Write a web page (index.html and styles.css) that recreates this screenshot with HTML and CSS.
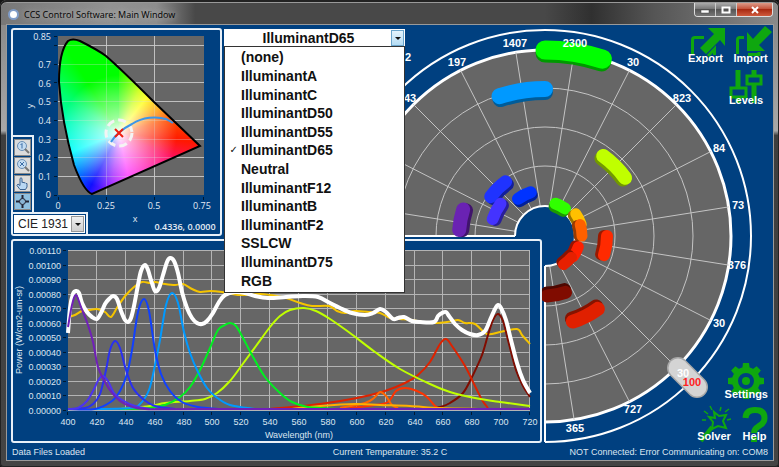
FILE: index.html
```html
<!DOCTYPE html>
<html lang="en">
<head>
  <meta charset="UTF-8">
  <meta name="viewport" content="width=device-width, initial-scale=1.0">
  <title>CCS Control Software: Main Window</title>
  <link rel="stylesheet" href="styles.css">
</head>
<body>
  <div class="window">

    <!-- Title bar -->
    <header class="titlebar">
      <span class="app-icon"></span>
      <h1>CCS Control Software: Main Window</h1>
      <div class="window-buttons">
        <button class="win-btn" aria-label="Minimize"><svg width="10" height="8"><rect x="1" y="4" width="8" height="3" fill="#fff" stroke="#444" stroke-width=".5"/></svg></button>
        <button class="win-btn" aria-label="Maximize"><svg width="10" height="8"><rect x="1.500" y="1.500" width="7" height="5" fill="#555" stroke="#fff" stroke-width="2"/></svg></button>
        <button class="win-btn close" aria-label="Close"><svg width="10" height="8"><path d="M2 1l6 6M8 1l-6 6" stroke="#fff" stroke-width="2"/></svg></button>
      </div>
    </header>

    <main class="client">

      <!-- LED dial -->
      <svg class="dial" viewBox="11 28 762 415" role="img" aria-label="LED levels">
        <defs>
          <clipPath id="dial-clip"><path d="M200 0H773V460H545V236H200Z"/></clipPath>
        </defs>
        <g clip-path="url(#dial-clip)">
          <circle cx="545" cy="236" r="206" class="rim-outer"/>
          <circle cx="545" cy="236" r="186" class="rim"/>
          <circle cx="545" cy="236" r="148" class="ring"/>
          <circle cx="545" cy="236" r="109" class="ring"/>
          <circle cx="545" cy="236" r="70" class="ring"/>
          <g id="spokes"></g>
        </g>
        <path d="M224 236H515M545 266V442" class="dial-edge"/>
        <path d="M515 236A30 30 0 1 1 545 266V236Z" fill="#004080"/>
        <path d="M515 236A30 30 0 1 1 545 266" class="dial-edge"/>
        <g id="leds"></g>
        <path d="M678 368L697 387" class="knob-edge"/>
        <path d="M678 368L697 387" class="knob"/>
        <g class="dial-labels">
          <text x="408" y="61">2</text>
          <text x="407" y="102">343</text>
          <text x="457" y="66">197</text>
          <text x="515" y="47">1407</text>
          <text x="575" y="47">2300</text>
          <text x="633" y="66">30</text>
          <text x="682" y="102">823</text>
          <text x="719" y="152">84</text>
          <text x="738" y="209">73</text>
          <text x="737" y="269">376</text>
          <text x="719" y="327">30</text>
          <text x="683" y="377">30</text>
          <text x="692" y="386" class="over">100</text>
          <text x="633" y="413">727</text>
          <text x="575" y="432">365</text>
        </g>
      </svg>

      <!-- Chromaticity diagram -->
      <section class="panel cie-panel">
        <svg class="chart" viewBox="13 30 207 204" role="img" aria-label="CIE 1931 chromaticity">
          <defs>
            <clipPath id="locus-clip"><path d="M92 194C86 192 80 181 74 165C67 140 61 112 59 82C59 62 62 48 68 41C71 39 75 39 80 41C90 46 98 50 106 56C122 70 138 86 154 102L200 146Z"/></clipPath>
          </defs>
          <rect x="58" y="36" width="146" height="159" fill="#666"/>
          <path d="M106.500 36V195M154.500 36V195M58 45.500H204M58 64.500H204M58 82.500H204M58 101.500H204M58 120.500H204M58 139.500H204M58 157.500H204M58 176.500H204" class="grid-line"/>
          <foreignObject x="56" y="36" width="148" height="160" clip-path="url(#locus-clip)"><div class="gamut"></div></foreignObject>
          <path d="M106.500 36V195M154.500 36V195M58 45.500H204M58 64.500H204M58 82.500H204M58 101.500H204M58 120.500H204M58 139.500H204M58 157.500H204M58 176.500H204" class="grid-line faint"/>
          <path d="M92 194C86 192 80 181 74 165C67 140 61 112 59 82C59 62 62 48 68 41C71 39 75 39 80 41C90 46 98 50 106 56C122 70 138 86 154 102L200 146Z" class="locus"/>
          <path d="M54 36.500H57M54 45.500H57M54 64.500H57M54 82.500H57M54 101.500H57M54 120.500H57M54 139.500H57M54 157.500H57M54 176.500H57M54 195.500H57M58.500 197V200M106.500 197V200M154.500 197V200M203.500 197V200" class="tick"/>
          <circle cx="119" cy="133" r="13" class="target"/>
          <path d="M111 142C116 134 124 128 132 124C143 117 156 116 166 119L173 123" class="planck"/>
          <path d="M115 129L123 137M123 129L115 137" class="cross"/>
          <g class="cie-labels end">
            <text x="51" y="40">0.85</text>
            <text x="51" y="68">0.7</text>
            <text x="51" y="87">0.6</text>
            <text x="51" y="105">0.5</text>
            <text x="51" y="124">0.4</text>
            <text x="51" y="143">0.3</text>
            <text x="51" y="161">0.2</text>
            <text x="51" y="180">0.1</text>
            <text x="51" y="198">0</text>
          </g>
          <g class="cie-labels">
            <text x="58" y="209">0</text>
            <text x="106" y="209">0.25</text>
            <text x="154" y="209">0.5</text>
            <text x="202" y="209">0.75</text>
            <text x="135" y="222">x</text>
            <text x="30" y="109" transform="rotate(-90 30 106)">y</text>
            <text x="185" y="230" class="readout">0.4336, 0.0000</text>
          </g>
        </svg>
        <div class="cie-controls">
          <div class="graph-tools">
            <button class="graph-btn" aria-label="Zoom"><svg width="15" height="15" viewBox="0 0 15 15"><circle cx="7" cy="6" r="4.500" fill="#c4dcf2" stroke="#6b8fb5"/><path d="M7 3.500V8.500M5.500 5L7 3.500" stroke="#3c6ea8" fill="none"/><path d="M10 9l4 4" stroke="#777" stroke-width="2"/></svg></button>
            <button class="graph-btn" aria-label="Zoom to fit"><svg width="15" height="15" viewBox="0 0 15 15"><circle cx="7" cy="6" r="4.500" fill="#c4dcf2" stroke="#6b8fb5"/><path d="M5 4l4 4M9 4l-4 4" stroke="#3c6ea8"/><path d="M10 9l4 4" stroke="#777" stroke-width="2"/></svg></button>
            <button class="graph-btn" aria-label="Pan"><svg width="15" height="15" viewBox="0 0 15 15"><path d="M5 13.500L2 9.500 3 8l2 1.500V2.500q1-1.500 2 0V6.500l1-.5 1 1 1-.5 1 1 1 0V11l-1.500 2.500Z" fill="#b9d7f3" stroke="#3c6290"/></svg></button>
            <button class="graph-btn active" aria-label="Cursor"><svg width="15" height="15" viewBox="0 0 15 15"><path d="M7.500 1V5M7.500 10V14M1 7.500H5M10 7.500H14" stroke="#223" stroke-width="2"/><circle cx="7.500" cy="7.500" r="3" fill="#8bb5d4" stroke="#223"/></svg></button>
          </div>
          <div class="space-picker">
            <select aria-label="Color space"><option>CIE 1931</option></select>
            <span class="arrow grey"></span>
          </div>
        </div>
      </section>

      <!-- Target spectrum list -->
      <div class="picker">
        <select id="illuminant" aria-label="Target spectrum"><option>IlluminantD65</option></select>
        <span class="arrow"></span>
        <ul class="menu">
          <li><button>(none)</button></li>
          <li><button>IlluminantA</button></li>
          <li><button>IlluminantC</button></li>
          <li><button>IlluminantD50</button></li>
          <li><button>IlluminantD55</button></li>
          <li class="checked"><button>IlluminantD65</button></li>
          <li><button>Neutral</button></li>
          <li><button>IlluminantF12</button></li>
          <li><button>IlluminantB</button></li>
          <li><button>IlluminantF2</button></li>
          <li><button>SSLCW</button></li>
          <li><button>IlluminantD75</button></li>
          <li><button>RGB</button></li>
        </ul>
      </div>

      <!-- Spectrum graph -->
      <section class="panel spectrum-panel">
        <svg class="chart" viewBox="13 241 527 200" role="img" aria-label="Spectrum">
          <rect x="68" y="250" width="462" height="160" fill="#666"/>
          <g id="spectrum-grid"></g>
          <g id="curves"></g>
          <text x="299" y="438" class="axis-label">Wavelength (nm)</text>
          <text x="19" y="333" class="axis-label" transform="rotate(-90 19 330)">Power (W/cm2-um-sr)</text>
        </svg>
      </section>

      <!-- Tool buttons -->
      <nav class="tools top">
        <div class="tool-row">
          <button class="tool">
            <svg width="35" height="34" viewBox="687 28 35 34"><path d="M707 28H724V46L719 40L705 54L699 48L713 34Z" fill="#0fa70f"/><path d="M691.500 54V40Q691.500 37.500 694 37.500H703M707 56L713.500 49V55" class="line"/></svg>
            <span>Export</span>
          </button>
          <button class="tool">
            <svg width="35" height="34" viewBox="733 28 35 34"><path d="M765 26L772 32L759 45L765 51H747V32L753 39Z" fill="#0fa70f"/><path d="M737.500 54V40Q737.500 37.500 740 37.500H744M748 54.500H759V52" class="line"/></svg>
            <span>Import</span>
          </button>
        </div>
        <div class="tool-row">
          <button class="tool">
            <svg width="44" height="34" viewBox="724 71 44 34"><path d="M738 71V88M738 98V104M754 71V76M754 86V104" class="bar"/><rect x="731" y="89" width="15" height="9" class="line"/><rect x="747" y="77" width="14" height="8" class="line"/></svg>
            <span>Levels</span>
          </button>
        </div>
      </nav>
      <nav class="tools bottom">
        <div class="tool-row">
          <button class="tool">
            <svg width="36" height="34" viewBox="728 363 36 34"><g fill="#0fa70f"><path id="tooth" d="M743 362H749L750 370H742Z"/><use href="#tooth" transform="rotate(45 746 380)"/><use href="#tooth" transform="rotate(90 746 380)"/><use href="#tooth" transform="rotate(135 746 380)"/><use href="#tooth" transform="rotate(180 746 380)"/><use href="#tooth" transform="rotate(225 746 380)"/><use href="#tooth" transform="rotate(270 746 380)"/><use href="#tooth" transform="rotate(315 746 380)"/></g><circle cx="746" cy="380" r="11" fill="none" stroke="#0fa70f" stroke-width="6"/><circle cx="746" cy="380" r="4" fill="#0fa70f"/></svg>
            <span>Settings</span>
          </button>
        </div>
        <div class="tool-row">
          <button class="tool">
            <svg width="34" height="34" viewBox="697 406 34 34"><path d="M701 441L712 427" stroke="#0fa70f" stroke-width="4"/><path d="M714 412L719 416L726 415L723 421L726 428L718 426L712 429L713 422L709 417L715 418Z" fill="none" stroke="#0fa70f" stroke-width="2"/><path d="M710 406L712 410M721 407L720 411M702 420H706M704 411L708 414M729 409L725 412M731 419L727 420" stroke="#0fa70f" stroke-width="1.500"/></svg>
            <span>Solver</span>
          </button>
          <button class="tool">
            <svg width="27" height="34" viewBox="740 406 27 34"><path d="M744.500 418Q745 410 754 410Q763.500 410 763.500 418Q763.500 423 758 426Q753 429 753 433M753 437V442" fill="none" stroke="#0fa70f" stroke-width="6"/></svg>
            <span>Help</span>
          </button>
        </div>
      </nav>

      <footer class="status">
        <span>Data Files Loaded</span>
        <span>Current Temperature: 35.2 C</span>
        <span class="right">NOT Connected: Error Communicating on: COM8</span>
      </footer>
    </main>
  </div>
  <script src="script.js"></script>
</body>
</html>
```

FILE: styles.css
```css
* {
  box-sizing: border-box;
}

:root {
  --blue: #004080;
  --line: #e8f0f8;
  --green: #0fa70f;
  --plot: #666;
}

body {
  margin: 0;
  background: #151515;
  font-family: "Liberation Sans", Arial, sans-serif;
  font-size: 9px;
  color: #dce6f0;
}

button,
select {
  font: inherit;
  color: inherit;
  margin: 0;
  padding: 0;
  border: 0;
  background: none;
}

svg {
  display: block;
  overflow: visible;
}

.window {
  display: flex;
  flex-direction: column;
  height: 100vh;
  padding: 3px 6px 7px 7px;
  border-radius: 7px 7px 4px 4px;
  background: linear-gradient(#848484, #a8a8a8 28%, #3e3e3e 29%, #444);
  box-shadow: inset 0 0 0 1px #222, inset 0 2px 0 #222, inset 0 3px 0 #999;
}

/* Title bar */
.titlebar {
  display: flex;
  align-items: center;
  height: 22px;
  margin: 0 -5px 0 -6px;
  padding: 0 5px 0 7px;
  border-radius: 5px 5px 0 0;
  background: linear-gradient(90deg, #777, #929292 14%, #8d8d8d 20%, #484848 25%, #484848 70%, #303030 76%, #555 84%, #8a8a8a);
}

.titlebar h1 {
  flex: 1;
  margin: 0;
  padding-left: 5px;
  font-family: "Open Sans", sans-serif;
  font-size: 9px;
  font-weight: 400;
  color: #000;
  text-shadow: 0 0 6px #ccc;
}

.app-icon {
  width: 11px;
  height: 11px;
  border: 2px solid #7f9cc8;
  border-radius: 50%;
  background: #fff;
}

.window-buttons {
  display: flex;
  align-self: flex-start;
  border: 1px solid #ddd;
  border-top: 0;
  border-radius: 0 0 4px 4px;
  overflow: hidden;
}

.win-btn {
  display: flex;
  align-items: center;
  justify-content: center;
  width: 21px;
  height: 13px;
  border-right: 1px solid #ccc;
  background: linear-gradient(#aaa, #777 45%, #555 50%, #777);
}

.win-btn.close {
  width: 35px;
  border: 0;
  background: linear-gradient(#dc9a88, #c4523a 45%, #a82a12 50%, #cf5a3c);
}

/* Client area */
.client {
  flex: 1;
  min-height: 0;
  display: grid;
  grid-template-columns: 211fr 320fr 231fr;
  grid-template-rows: minmax(0, 208fr) minmax(0, 204fr) 14px;
  row-gap: 3px;
  padding: 3px 0 0 4px;
  background: var(--blue);
  box-shadow: 0 0 0 1px #9a9a9a;
}

.dial {
  grid-area: 1 / 1 / 3 / 4;
  width: 100%;
  height: 100%;
}

.panel {
  border: 2px solid var(--line);
  border-radius: 3px;
  background: var(--blue);
}

.cie-panel {
  grid-area: 1 / 1;
  display: grid;
  min-height: 0;
}

.spectrum-panel {
  grid-area: 2 / 1 / 3 / 3;
  min-height: 0;
}

.chart {
  grid-area: 1 / 1;
  width: 100%;
  height: 100%;
  min-height: 0;
}

/* Dial */
.rim-outer {
  fill: var(--blue);
  stroke: #fff;
  stroke-width: 2px;
}

.rim {
  fill: var(--plot);
  stroke: #fff;
  stroke-width: 3px;
}

.ring,
.spoke {
  fill: none;
  stroke: #c4c4c4;
  stroke-width: 1px;
}

.dial-edge {
  fill: none;
  stroke: #fff;
  stroke-width: 2px;
}

.led,
.knob,
.knob-edge {
  fill: none;
  stroke-linecap: round;
}

.knob-edge {
  stroke: #a8a8a8;
  stroke-width: 22px;
}

.knob {
  stroke: #d4d4d4;
  stroke-width: 19px;
}

.dial-labels {
  font-size: 11px;
  font-weight: 700;
  fill: #fff;
  text-anchor: middle;
}

.dial-labels .over {
  fill: #f22;
}

/* Charts */
.grid-line {
  fill: none;
  stroke: #b4b4b4;
  stroke-width: 1px;
}

.grid-line.faint {
  stroke: #ddd;
  opacity: 0.3;
}

.tick {
  stroke: #001830;
  stroke-width: 1px;
}

.gamut {
  height: 160px;
  background:
    radial-gradient(circle at 63px 97px, #fff 0, rgba(255, 255, 255, 0.6) 16px, rgba(255, 255, 255, 0) 58px),
    conic-gradient(from 0deg at 63px 97px, #20ff00, #60ff00 10deg, #c8ff00 25deg, #ffff00 38deg, #ffb000 55deg, #ff5000 75deg, #ff1800 97deg, #ff1060 115deg, #ff20b0 140deg, #ff30ff 168deg, #a020ff 188deg, #1010ff 208deg, #0080ff 226deg, #00ffff 248deg, #00ffc0 280deg, #00ff70 305deg, #00ff00 328deg, #00ff00);
}

.locus {
  fill: none;
  stroke: #000;
  stroke-width: 2px;
}

.target {
  fill: none;
  stroke: #f4f4f4;
  stroke-width: 3px;
  stroke-dasharray: 8 4;
}

.planck {
  fill: none;
  stroke: #3c96e8;
  stroke-width: 2px;
}

.cross {
  stroke: #f02010;
  stroke-width: 2px;
}

.cie-labels {
  font-family: "Open Sans", sans-serif;
  font-size: 9px;
  fill: #e4ecf4;
  text-anchor: middle;
}

.cie-labels.end {
  text-anchor: end;
}

.cie-labels .readout {
  font-weight: 600;
}

.axis-label {
  font-size: 9px;
  fill: #dce6f0;
  text-anchor: middle;
}

.axis-label.end {
  text-anchor: end;
}

.curve {
  fill: none;
  stroke-width: 2px;
}

.curve.total {
  stroke-width: 4px;
}

/* Chromaticity controls */
.cie-controls {
  grid-area: 1 / 1;
  align-self: end;
  justify-self: start;
}

.graph-tools {
  display: grid;
  gap: 1px;
  width: 21px;
  padding: 2px 1px;
  border: solid var(--line);
  border-width: 2px 2px 0 0;
  background: var(--blue);
}

.graph-btn {
  display: flex;
  align-items: center;
  justify-content: center;
  width: 17px;
  height: 17px;
  border: 1px solid #888;
  background: #dcdcdc;
}

.graph-btn.active {
  background: #8fc0e0;
}

.space-picker {
  display: flex;
  position: relative;
  width: 75px;
  padding: 1px;
  border: solid var(--line);
  border-width: 2px 2px 0 0;
  background: var(--blue);
}

.space-picker select {
  appearance: none;
  width: 100%;
  height: 18px;
  padding-left: 4px;
  background: #fff;
  color: #222;
  font-size: 12px;
}

/* Target spectrum list */
.picker {
  grid-area: 1 / 2;
  position: relative;
  align-self: start;
  width: 181px;
  margin: 1px 0 0 2px;
  z-index: 2;
}

.picker select {
  appearance: none;
  display: block;
  width: 100%;
  height: 18px;
  padding-right: 12px;
  background: #fff;
  color: #111;
  font-size: 14px;
  font-weight: 700;
  text-align-last: center;
}

/* Drop-down arrow, lies over the select */
.arrow {
  position: absolute;
  top: 1px;
  right: 1px;
  bottom: 1px;
  width: 13px;
  display: grid;
  place-items: center;
  border: 1px solid #6aa5cc;
  background: linear-gradient(#e4f4fd, #b4dcf4);
  pointer-events: none;
}

.arrow.grey {
  top: 2px;
  right: 2px;
  bottom: 2px;
  border-color: #999;
  background: linear-gradient(#f0f0f0, #cfcfcf);
}

.arrow::after {
  content: "";
  border: 3px solid transparent;
  border-top-color: #111;
  border-bottom: 0;
}

.menu {
  position: absolute;
  top: 100%;
  left: 0;
  width: 100%;
  height: 247px;
  display: grid;
  grid-auto-rows: 1fr;
  margin: 0;
  margin-top: -1px;
  padding: 1px 0 2px;
  list-style: none;
  border: 1px solid #333;
  background: #fff;
  color: #111;
  font-size: 14px;
  font-weight: 700;
}

.menu li {
  display: grid;
  grid-template-columns: 16px 1fr;
  align-items: center;
  line-height: 18px;
}

.menu li::before {
  content: "";
  font-family: "DejaVu Sans", sans-serif;
  font-size: 10px;
  text-align: right;
  padding-right: 3px;
}

.menu li.checked::before {
  content: "✓";
}

.menu button {
  text-align: left;
}

/* Tool buttons */
.tools {
  display: flex;
  flex-direction: column;
  gap: 5px;
  justify-self: end;
}

.tools.top {
  grid-area: 1 / 3;
  align-self: start;
}

.tools.bottom {
  grid-area: 2 / 3;
  align-self: end;
}

.tool-row {
  display: flex;
  justify-content: flex-end;
}

.tool {
  display: flex;
  flex-direction: column;
  align-items: center;
  padding: 0 5px;
  color: #fff;
  font-size: 11px;
  font-weight: 700;
  line-height: 14px;
}

.tool span {
  position: relative;
  margin-top: -11px;
}

.tool .line {
  fill: none;
  stroke: var(--green);
  stroke-width: 3px;
}

.tool .bar {
  stroke: var(--green);
  stroke-width: 5px;
}

/* Status bar */
.status {
  grid-area: 3 / 1 / 4 / 4;
  display: grid;
  grid-template-columns: 1fr auto 1fr;
  align-items: center;
  padding: 0 5px 2px 1px;
}

.status .right {
  text-align: right;
}
```

FILE: script.js
```javascript
const SVG = 'http://www.w3.org/2000/svg';

function add(parentId, tag, attrs, text) {
  const el = document.createElementNS(SVG, tag);
  for (const key in attrs) el.setAttribute(key, attrs[key]);
  if (text) el.textContent = text;
  document.getElementById(parentId).appendChild(el);
}

// Point on the dial, angle in degrees clockwise from the top
function polar(r, angle) {
  const a = angle * Math.PI / 180;
  return (545 + r * Math.sin(a)) + ' ' + (236 - r * Math.cos(a));
}

for (let i = 0; i < 20; i++) {
  add('spokes', 'path', { class: 'spoke', d: 'M' + polar(30, 9 + 18 * i) + 'L' + polar(186, 9 + 18 * i) });
}

// radius, angle, half span, width, color, side color
const leds = [
  [186, 9, 9, 19, '#00ff00', '#009900'],
  [147, -9, 9, 16, '#0099ff', '#005c99'],
  [99, 45, 9, 14, '#c0ff00', '#739900'],
  [34, 27, 9, 12, '#30ff00', '#1d9900'],
  [38, 63, 9, 11, '#ffc000', '#997300'],
  [37, 81, 9, 11, '#ff6000', '#993a00'],
  [62, 99, 9, 12, '#ff2a00', '#991900'],
  [35, 117, 9, 11, '#ff2000', '#991300'],
  [34, 138, 9, 11, '#e62000', '#8a1300'],
  [90, 153, 9, 14, '#e02000', '#861300'],
  [60, 169, 9, 13, '#800c00', '#4d0700'],
  [46, -27, 9, 12, '#0033ff', '#001f99'],
  [67, -45, 9, 13, '#1f33ff', '#131f99'],
  [55, -63, 9, 12, '#4433ff', '#291f99'],
  [86, -79, 7, 14, '#6a22b3', '#40146b']
];

for (const [r, angle, half, width, color, side] of leds) {
  for (const [radius, stroke] of [[r - 3, side], [r, color]]) {
    add('leds', 'path', {
      class: 'led',
      stroke: stroke,
      'stroke-width': width,
      d: 'M' + polar(radius, angle - half) + 'A' + radius + ' ' + radius + ' 0 0 1 ' + polar(radius, angle + half)
    });
  }
}

// Axes of the spectrum graph
for (let i = 0; i <= 16; i++) {
  const x = Math.round(68 + i * 28.875);
  if (i > 0) add('spectrum-grid', 'path', { class: 'grid-line', d: 'M' + (x - 0.5) + ' 250V410' });
  add('spectrum-grid', 'path', { class: 'tick', d: 'M' + (x - 0.5) + ' 412V415' });
  add('spectrum-grid', 'text', { class: 'axis-label', x: x, y: 425 }, String(400 + i * 20));
}
for (let i = 0; i <= 11; i++) {
  const y = Math.round(410 - i * 14.545);
  add('spectrum-grid', 'path', { class: 'grid-line', d: 'M68 ' + (y + 0.5) + 'H530' });
  add('spectrum-grid', 'path', { class: 'tick', d: 'M63 ' + (y + 0.5) + 'H66' });
  add('spectrum-grid', 'text', { class: 'axis-label end', x: 61, y: y + 4 }, (i / 10000).toFixed(5));
}

// Smooth line through the points
function smooth(points) {
  const p = points.trim().split(/\s+/).map(s => s.split(',').map(Number));
  let d = 'M' + p[0];
  for (let i = 0; i < p.length - 1; i++) {
    const a = p[i - 1] || p[i], b = p[i], c = p[i + 1], e = p[i + 2] || c;
    d += 'C' + [b[0] + (c[0] - a[0]) / 6, b[1] + (c[1] - a[1]) / 6,
      c[0] - (e[0] - b[0]) / 6, c[1] - (e[1] - b[1]) / 6, c[0], c[1]].join(' ');
  }
  return d;
}

const curves = [
  ['#f5c400', '68,317 75,315 82,311 90,310 97,309 105,312 111,317 118,306 126,295 134,287 142,282 150,283 155,282 165,284 175,285 183,284 192,289 200,292 210,291 222,292 240,295 260,294 270,295 286,298 300,303 312,306 329,306 337,311 345,313 355,311 370,312 380,313 390,318 400,319 412,320 430,323 447,322 458,320 465,323 475,324 487,334 500,332 517,329 522,335 530,344'],
  ['#800c00', '430,409 440,407 450,403 463,393 472,377 482,355 488,335 493,320 498,314 503,321 508,340 516,370 523,386 530,397'],
  ['#dd2200', '270,409 320,404 357,398 385,391 405,383 418,375 430,362 440,344 446,339 452,346 465,366 475,386 482,400 488,408'],
  ['#ff3300', '350,408 375,405 388,402 396,391 405,388 417,391 427,397 435,406 440,409'],
  ['#ff6600', '340,408 365,403 374,398 380,392 386,396 392,405 398,408'],
  ['#ffb000', '290,409 320,406 355,404 380,405 410,406 440,408 480,409'],
  ['#c0ff00', '120,409 150,406 165,403 190,401 205,399 217,393 230,381 242,365 256,346 270,327 280,316 290,310 304,308 316,311 330,319 350,333 375,352 400,369 430,384 450,392 475,398 500,402 530,406'],
  ['#00f020', '120,409 150,408 165,405 180,397 190,387 200,370 210,348 218,330 225,325 230,323 236,326 243,338 252,355 265,377 280,393 292,402 308,407 340,409'],
  ['#0099ff', '95,409 130,408 140,404 149,390 155,365 160,340 166,305 172,293 178,303 184,332 190,353 198,372 207,388 216,397 230,405 255,409'],
  ['#1040ff', '68,409 95,409 112,401 120,391 127,374 132,350 138,312 144,299 149,311 155,350 161,374 170,391 182,402 198,407 220,409'],
  ['#2a30f0', '68,409 85,408 93,404 100,394 106,370 110,350 115,341 120,348 126,370 133,388 143,399 155,406 175,409'],
  ['#4c33f0', '68,409 78,408 87,401 93,391 99,379 103,376 108,381 114,393 122,400 135,406 150,409']
];

for (const [color, points] of curves) {
  add('curves', 'path', { class: 'curve', stroke: color, d: smooth(points) });
}
add('curves', 'path', { class: 'curve total', stroke: '#fff', d: smooth('68,333 70,308 73,294 76,291 79,293 82,303 87,312 92,317 97,319 101,313 105,304 109,299 113,296 117,299 121,311 125,320 128,322 131,318 134,306 138,285 141,271 145,265 148,270 151,280 155,291 159,288 163,275 167,262 170,258 174,261 178,273 182,292 187,308 192,318 197,323 202,324 207,321 213,313 219,302 225,295 235,292 245,293 255,296 268,298 286,297 303,296 318,297 330,303 340,308 352,313 365,315 373,313 380,309 386,312 393,319 398,318 404,317 412,321 420,322 434,322 438,316 442,313 446,312 449,316 455,324 462,330 470,334 478,335 485,331 490,320 495,309 498,305 501,308 506,320 511,340 517,363 523,380 530,393') });
add('curves', 'path', { class: 'curve', stroke: '#7020b8', d: smooth('68,327 72,305 76,295 81,307 88,325 93,342 98,367 105,382 112,393 120,401 130,406 145,409 200,409 530,409') });
```
